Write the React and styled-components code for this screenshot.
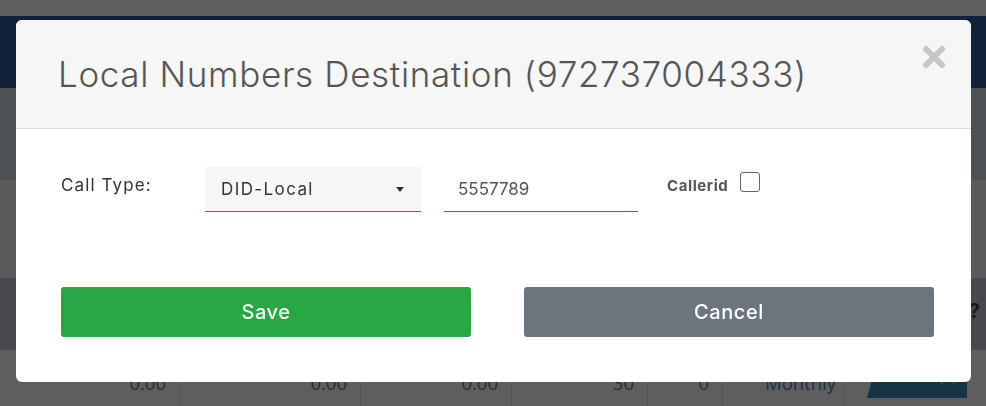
import React from 'react';
import styled, { createGlobalStyle } from 'styled-components';

const GlobalStyle = createGlobalStyle`
    html, body {
        margin: 0;
        padding: 0;
        width: 986px;
        height: 406px;
        overflow: hidden;
        font-family: Inter, "Open Sans", "Liberation Sans", sans-serif;
    }
    * {
        box-sizing: border-box;
    }
`;

const Page = styled.div`
    width: 986px;
    height: 406px;
    display: flex;
    flex-direction: column;
    background-color: #bdbdbd;
`;

const Band = styled.div`
    height: ${({h}) => h}px;
    flex: 0 0 auto;
    background-color: ${({bg}) => bg};
    display: flex;
    justify-content: flex-end;
    align-items: center;
`;

const Help = styled.span`
    font-size: 20px;
    font-weight: 700;
    color: #333;
    margin: 0 6px 6px 0;
`;

const TableRow = styled.div`
    flex: 1 0 auto;
    display: grid;
    grid-template-columns: 180px 181px 151px 136px 75px 122px 141px;
    background-color: #bdbdbd;
`;

const Cell = styled.div`
    display: flex;
    justify-content: ${({left}) => left ? 'flex-start' : 'flex-end'};
    align-items: flex-start;
    padding: 20px ${({left}) => left ? '0' : '13px'} 0 ${({left}) => left ? '42px' : '0'};
    border-right: 1px solid #a9a9a9;
    font-family: "Open Sans", sans-serif;
    font-size: 18.5px;
    color: ${({left}) => left ? '#3e5e88' : '#555'};
`;

const ReleaseCell = styled.div`
    padding: 14px 0 0 22px;
`;

const ReleaseButton = styled.div`
    width: 100px;
    height: 34px;
    background-color: #2b6a8a;
    clip-path: polygon(9px 0, 100% 0, 100% 100%, 0 100%);
    color: #a9c3cf;
    font-size: 16px;
    padding: 0 0 0 14px;
    font-family: "Open Sans", sans-serif;
`;

const Overlay = styled.div`
    position: fixed;
    left: 0;
    top: 0;
    width: 100%;
    height: 100%;
    z-index: 20;
    background-color: rgba(0, 0, 0, 0.5);
    padding: 20px 15px 0 16px;
`;

const Modal = styled.div`
    width: 955px;
    height: 362px;
    background-color: #fff;
    border-radius: 6px;
    overflow: hidden;
    display: flex;
    flex-direction: column;
`;

const Header = styled.div`
    height: 109px;
    flex: 0 0 auto;
    background-color: #f6f6f6;
    border-bottom: 1px solid #dcdcdc;
    display: flex;
    justify-content: space-between;
    align-items: center;
    padding-left: 42px;
`;

const Title = styled.h2`
    margin: 0;
    font-size: 35px;
    font-weight: 300;
    color: #555;
    letter-spacing: 0.65px;
`;

const Close = styled.button`
    align-self: flex-start;
    margin: 24px 24px 0 0;
    padding: 0;
    border: none;
    background: none;
    width: 26px;
    height: 26px;
    display: flex;
    align-items: center;
    justify-content: center;
`;

const Body = styled.div`
    flex: 1 0 auto;
    display: flex;
    flex-direction: column;
    padding: 38px 37px 0 45px;
`;

const FormRow = styled.div`
    display: flex;
    align-items: flex-start;
    height: 45px;
`;

const Label = styled.label`
    width: 144px;
    padding-top: 8px;
    font-size: 17px;
    color: #333;
    letter-spacing: 1.1px;
`;

const Select = styled.div`
    width: 216px;
    height: 45px;
    background-color: #f6f7f9;
    border-bottom: 1px solid #1976d2;
    display: flex;
    align-items: center;
    justify-content: space-between;
    padding: 0 17px 0 16px;
    font-size: 17px;
    color: #333;
    letter-spacing: 1.4px;
`;

const Caret = styled.span`
    width: 0;
    height: 0;
    border-left: 4px solid transparent;
    border-right: 4px solid transparent;
    border-top: 5px solid #333;
`;

const Input = styled.div`
    width: 194px;
    height: 45px;
    margin-left: 23px;
    border-bottom: 1px solid #1976d2;
    display: flex;
    align-items: center;
    padding-left: 14px;
    font-size: 17px;
    color: #555;
`;

const CheckField = styled.div`
    display: flex;
    align-items: flex-start;
    margin-left: 29px;
    gap: 12px;
`;

const CheckLabel = styled.span`
    font-size: 15px;
    font-weight: 700;
    color: #555;
    padding-top: 9px;
    letter-spacing: 0.6px;
`;

const CheckBox = styled.span`
    width: 20px;
    height: 20px;
    margin-top: 5px;
    border: 1.5px solid #666;
    border-radius: 3px;
    background: #fff;
`;

const Buttons = styled.div`
    display: grid;
    grid-template-columns: 410px 410px;
    column-gap: 53px;
    margin-top: 75px;
`;

const Button = styled.button`
    height: 50px;
    border: none;
    border-radius: 3px;
    background-color: ${({variant}) => variant === 'save' ? '#28a745' : '#6c757d'};
    color: #fff;
    font-family: Inter, "Open Sans", sans-serif;
    font-size: 20px;
    font-weight: 500;
    letter-spacing: 0.6px;
`;

const App = () => {
    return (
        <>
            <GlobalStyle/>
            <Page>
                <Band h={16} bg="#bebebe"/>
                <Band h={72} bg="#23426f"/>
                <Band h={92} bg="#9aa2ac"/>
                <Band h={98} bg="#b4b4b4"/>
                <Band h={72} bg="#8e9299"><Help>?</Help></Band>
                <TableRow>
                    <Cell>0.00</Cell>
                    <Cell>0.00</Cell>
                    <Cell>0.00</Cell>
                    <Cell>30</Cell>
                    <Cell>0</Cell>
                    <Cell left>Monthly</Cell>
                    <ReleaseCell><ReleaseButton>Release(0)</ReleaseButton></ReleaseCell>
                </TableRow>
            </Page>
            <Overlay>
                <Modal>
                    <Header>
                        <Title>Local Numbers Destination (972737004333)</Title>
                        <Close aria-label="Close">
                            <svg width="24" height="24" viewBox="0 0 24 24">
                                <path d="M4 4 L20 20 M20 4 L4 20" stroke="#c6c6c6" strokeWidth="6" strokeLinecap="round"/>
                            </svg>
                        </Close>
                    </Header>
                    <Body>
                        <FormRow>
                            <Label>Call Type:</Label>
                            <Select>
                                <span>DID-Local</span>
                                <Caret/>
                            </Select>
                            <Input>5557789</Input>
                            <CheckField>
                                <CheckLabel>Callerid</CheckLabel>
                                <CheckBox/>
                            </CheckField>
                        </FormRow>
                        <Buttons>
                            <Button variant="save">Save</Button>
                            <Button>Cancel</Button>
                        </Buttons>
                    </Body>
                </Modal>
            </Overlay>
        </>
    );
};

export default App;
